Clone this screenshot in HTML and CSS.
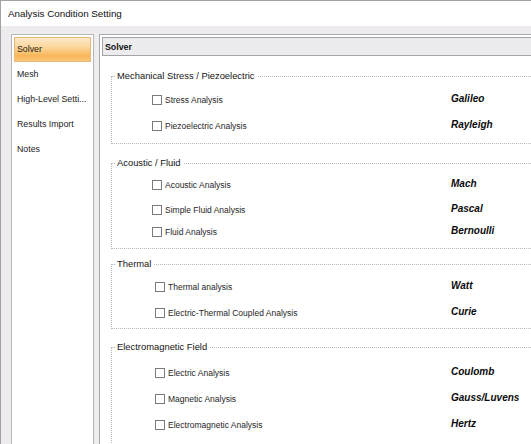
FILE: index.html
```html
<!DOCTYPE html>
<html>
<head>
<meta charset="utf-8">
<link rel="stylesheet" href="styles.css">
</head>
<body>
<div class="window">
  <div class="titlebar">Analysis Condition Setting</div>
  <div class="client">
    <nav class="sidebar">
      <div class="nav-item selected">Solver</div>
      <div class="nav-item">Mesh</div>
      <div class="nav-item">High-Level Setti...</div>
      <div class="nav-item">Results Import</div>
      <div class="nav-item">Notes</div>
    </nav>
    <main class="panel">
      <div class="panel-header">Solver</div>
      <div class="groups">
        <fieldset class="group g1">
          <legend>Mechanical Stress / Piezoelectric</legend>
          <div class="row"><label class="opt"><span class="box"></span>Stress Analysis</label><span class="name">Galileo</span></div>
          <div class="row"><label class="opt"><span class="box"></span>Piezoelectric Analysis</label><span class="name">Rayleigh</span></div>
        </fieldset>
        <fieldset class="group g2">
          <legend>Acoustic / Fluid</legend>
          <div class="row"><label class="opt"><span class="box"></span>Acoustic Analysis</label><span class="name">Mach</span></div>
          <div class="row"><label class="opt"><span class="box"></span>Simple Fluid Analysis</label><span class="name">Pascal</span></div>
          <div class="row tight"><label class="opt"><span class="box"></span>Fluid Analysis</label><span class="name">Bernoulli</span></div>
        </fieldset>
        <fieldset class="group g3 shifted">
          <legend>Thermal</legend>
          <div class="row"><label class="opt"><span class="box"></span>Thermal analysis</label><span class="name">Watt</span></div>
          <div class="row"><label class="opt"><span class="box"></span>Electric-Thermal Coupled Analysis</label><span class="name">Curie</span></div>
        </fieldset>
        <fieldset class="group g4 shifted">
          <legend>Electromagnetic Field</legend>
          <div class="row"><label class="opt"><span class="box"></span>Electric Analysis</label><span class="name">Coulomb</span></div>
          <div class="row"><label class="opt"><span class="box"></span>Magnetic Analysis</label><span class="name">Gauss/Luvens</span></div>
          <div class="row"><label class="opt"><span class="box"></span>Electromagnetic Analysis</label><span class="name">Hertz</span></div>
        </fieldset>
      </div>
    </main>
  </div>
</div>
</body>
</html>
```
FILE: styles.css
```css
html, body {
  margin: 0;
  padding: 0;
  overflow: hidden;
  background: #ffffff;
}
body {
  font-family: "Liberation Sans", Arial, sans-serif;
  color: #1a1a1a;
}
.window {
  width: 531px;
  height: 444px;
  box-sizing: border-box;
  border-top: 1px solid #a3a3a3;
  border-left: 1px solid #a3a3a3;
  overflow: hidden;
  display: flex;
  flex-direction: column;
}
.titlebar {
  height: 25px;
  flex: none;
  padding-left: 7px;
  font-size: 9.8px;
  line-height: 26px;
  background: #ffffff;
  color: #111;
}
.client {
  flex: none;
  height: 460px;
  background: #efecf0;
  display: flex;
  gap: 5px;
  padding: 8px 0 0 10px;
  box-sizing: border-box;
}
.sidebar {
  width: 79px;
  flex: none;
  background: #ffffff;
  border: 1px solid #b7b5ba;
  padding: 2px 1px 0 1px;
}
.nav-item {
  height: 25px;
  box-sizing: border-box;
  padding: 5px 0 0 3px;
  margin: 0 1px;
  font-size: 8.8px;
  line-height: 14px;
  color: #222;
  white-space: nowrap;
}
.nav-item.selected {
  border: 1px solid #eab877;
  padding: 4px 0 0 2px;
  background: linear-gradient(#fde9cb 0%, #fcd79a 40%, #f9b658 78%, #fac77c 100%);
}
.panel {
  flex: 1;
  min-width: 0;
  overflow: hidden;
  background: #ffffff;
  border: 1px solid #a9a8ab;
  border-right: none;
  padding: 2px 0 0 2px;
}
.panel-header {
  height: 17px;
  border: 1px solid #a4a3a6;
  border-right: none;
  background: #ecebee;
  padding-left: 2px;
  font-size: 8.8px;
  font-weight: bold;
  line-height: 18px;
  color: #111;
}
.groups {
  padding-left: 9px;
  margin-right: -40px;
  display: flex;
  flex-direction: column;
}
.group {
  margin: 0;
  padding: 0 0 6px 0;
  border: 1px dotted #b9b6bd;
  min-width: 0;
  display: flex;
  flex-direction: column;
  gap: 4px;
}
.group legend {
  margin-left: 3px;
  padding: 0 2px;
  font-size: 9.4px;
  line-height: 14px;
  color: #151515;
}
.g1 { margin-top: 13px; padding-top: 6px; padding-bottom: 6px; }
.g2 { margin-top: 12px; padding-top: 4px; padding-bottom: 5px; gap: 3px; }
.g3 { margin-top: 8px; padding-top: 5px; padding-bottom: 4px; }
.g4 { margin-top: 11px; padding-top: 8px; padding-bottom: 40px; gap: 4px; }
.row {
  height: 22px;
  padding-left: 40px;
  display: grid;
  grid-template-columns: 299px auto;
  align-items: center;
}
.row.tight { margin-top: -3px; }
.shifted .row {
  padding-left: 43px;
  grid-template-columns: 296px auto;
}
.opt {
  display: flex;
  align-items: center;
  gap: 3px;
  font-size: 8.5px;
  color: #262626;
  white-space: nowrap;
}
.box {
  width: 8px;
  height: 8px;
  border: 1px solid #7b7b7e;
  background: #ffffff;
  flex: none;
}
.name {
  font-size: 10px;
  font-weight: bold;
  font-style: italic;
  color: #0a0a0a;
  padding-bottom: 4px;
  white-space: nowrap;
}
```
